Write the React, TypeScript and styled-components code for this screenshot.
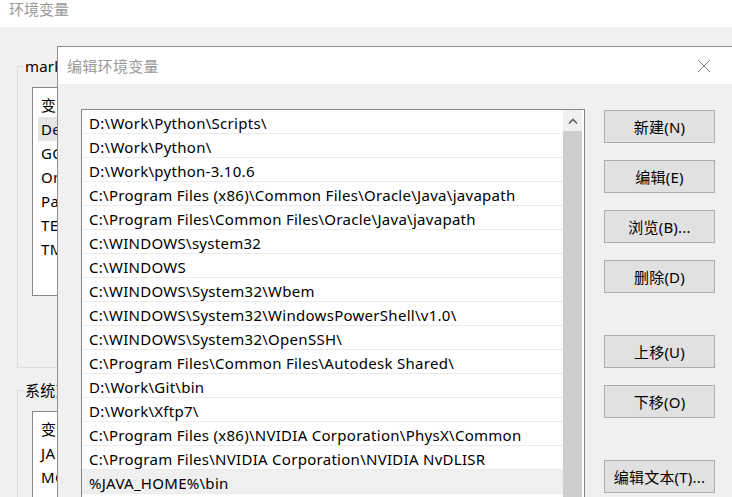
import React from "react";
import styled, { createGlobalStyle } from "styled-components";

const FONT = `"Segoe UI", "Noto Sans", "Noto Sans CJK SC", sans-serif`;

const GlobalStyle = createGlobalStyle`
  html, body { margin: 0; padding: 0; }
  body {
    width: 732px;
    height: 497px;
    overflow: hidden;
    background: #f0f0f0;
    font-family: ${FONT};
    font-size: 15px;
    color: #000;
  }
  #root { width: 732px; height: 497px; position: relative; overflow: hidden; }
`;

const Desktop = styled.div`
  position: relative;
  width: 732px;
  height: 497px;
  overflow: hidden;
`;

/* ---------- background window ---------- */
const BgWindow = styled.div`
  display: flex;
  flex-direction: column;
  width: 732px;
  height: 497px;
  background: #f0f0f0;
`;

const BgTitleBar = styled.div`
  height: 27px;
  flex: none;
  background: #fff;
  color: #9a9a9a;
  padding-left: 9px;
  line-height: 18px;
  font-size: 15px;
`;

const BgBody = styled.div`
  display: flex;
  flex-direction: column;
  padding: 29px 0 0 17px;
  gap: 12px;
`;

const Group = styled.fieldset<{ $height: number }>`
  margin: 0;
  padding: 11px 0 0 14px;
  border: 1px solid #dcdcdc;
  height: ${(p) => p.$height}px;
  box-sizing: border-box;
  min-width: 0;
  width: 700px;
`;

const Legend = styled.legend`
  padding: 0 1px;
  margin-left: -8px;
  font-size: 15px;
  line-height: 20px;
  letter-spacing: 0.2px;
`;

const ListBox = styled.div<{ $height: number }>`
  width: 600px;
  height: ${(p) => p.$height}px;
  border: 1px solid #828790;
  background: #fff;
  box-sizing: border-box;
  padding: 5px 0 0 5px;
`;

const BgRow = styled.div<{ $selected?: boolean }>`
  height: 24px;
  line-height: 24px;
  padding-left: 3px;
  width: 200px;
  letter-spacing: 0.3px;
  background: ${(p) => (p.$selected ? "#e5e5e5" : "transparent")};
`;

/* ---------- dialog ---------- */
const Dialog = styled.div`
  position: absolute;
  left: 57px;
  top: 46px;
  width: 700px;
  height: 470px;
  border: 1px solid #8e8e8e;
  background: #f0f0f0;
  display: flex;
  flex-direction: column;
`;

const TitleBar = styled.div`
  height: 37px;
  flex: none;
  background: #fff;
  display: flex;
  align-items: center;
  padding-left: 9px;
  padding-right: 22px;
  width: 675px;
  box-sizing: border-box;
  color: #9a9a9a;
  font-size: 15px;
`;

const TitleText = styled.span`
  flex: 1;
  margin-top: -1px;
  letter-spacing: 0.3px;
`;

const CloseIcon = styled.svg`
  width: 14px;
  height: 14px;
  flex: none;
`;

const DialogBody = styled.div`
  display: flex;
  align-items: flex-start;
  padding: 25px 0 0 23px;
  gap: 19px;
`;

const PathList = styled.div`
  width: 504px;
  height: 420px;
  box-sizing: border-box;
  border: 1px solid #828790;
  background: #fff;
  display: flex;
  padding-right: 2px;
`;

const Rows = styled.div`
  flex: 1;
  display: flex;
  flex-direction: column;
`;

const PathRow = styled.div<{ $selected?: boolean }>`
  height: 23px;
  flex: none;
  border-bottom: 1px solid #ececec;
  padding-left: 7px;
  line-height: 26px;
  white-space: nowrap;
  font-size: 15px;
  letter-spacing: 0.28px;
  background: ${(p) => (p.$selected ? "#efefef" : "#fff")};
`;

const ScrollBar = styled.div`
  width: 19px;
  flex: none;
  display: flex;
  flex-direction: column;
  background: #f0f0f0;
`;

const ScrollArrow = styled.div`
  height: 21px;
  flex: none;
  display: flex;
  align-items: center;
  justify-content: center;
  background: #f0f0f0;
`;

const ScrollThumb = styled.div`
  flex: 1;
  background: #cdcdcd;
`;

const Buttons = styled.div`
  display: flex;
  flex-direction: column;
  padding-top: 1px;
`;

const Button = styled.div<{ $gap: number }>`
  width: 111px;
  height: 33px;
  box-sizing: border-box;
  margin-top: ${(p) => p.$gap}px;
  background: #e1e1e1;
  border: 1px solid #adadad;
  display: flex;
  align-items: center;
  justify-content: center;
  font-size: 15px;
  letter-spacing: 0.2px;
  white-space: nowrap;
`;

const bgUserRows = ["变量", "De", "GO", "On", "Pa", "TE", "TM"];
const bgSysRows = ["变量", "JA", "MC", "M"];

const paths = [
  "D:\\Work\\Python\\Scripts\\",
  "D:\\Work\\Python\\",
  "D:\\Work\\python-3.10.6",
  "C:\\Program Files (x86)\\Common Files\\Oracle\\Java\\javapath",
  "C:\\Program Files\\Common Files\\Oracle\\Java\\javapath",
  "C:\\WINDOWS\\system32",
  "C:\\WINDOWS",
  "C:\\WINDOWS\\System32\\Wbem",
  "C:\\WINDOWS\\System32\\WindowsPowerShell\\v1.0\\",
  "C:\\WINDOWS\\System32\\OpenSSH\\",
  "C:\\Program Files\\Common Files\\Autodesk Shared\\",
  "D:\\Work\\Git\\bin",
  "D:\\Work\\Xftp7\\",
  "C:\\Program Files (x86)\\NVIDIA Corporation\\PhysX\\Common",
  "C:\\Program Files\\NVIDIA Corporation\\NVIDIA NvDLISR",
  "%JAVA_HOME%\\bin",
];

const buttons: [string, number][] = [
  ["新建(N)", 0],
  ["编辑(E)", 17],
  ["浏览(B)...", 17],
  ["删除(D)", 17],
  ["上移(U)", 42],
  ["下移(O)", 17],
  ["编辑文本(T)...", 42],
];

export default function App() {
  return (
    <>
      <GlobalStyle />
      <Desktop>
        <BgWindow>
          <BgTitleBar>环境变量</BgTitleBar>
          <BgBody>
            <Group $height={312}>
              <Legend>mark</Legend>
              <ListBox $height={209}>
                {bgUserRows.map((r, i) => (
                  <BgRow key={i} $selected={i === 1}>
                    {r}
                  </BgRow>
                ))}
              </ListBox>
            </Group>
            <Group $height={140}>
              <Legend>系统变量</Legend>
              <ListBox $height={120}>
                {bgSysRows.map((r, i) => (
                  <BgRow key={i}>{r}</BgRow>
                ))}
              </ListBox>
            </Group>
          </BgBody>
        </BgWindow>

        <Dialog>
          <TitleBar>
            <TitleText>编辑环境变量</TitleText>
            <CloseIcon viewBox="0 0 14 14">
              <path d="M1 1 L13 13 M13 1 L1 13" stroke="#8a8a8a" strokeWidth="1" fill="none" />
            </CloseIcon>
          </TitleBar>
          <DialogBody>
            <PathList>
              <Rows>
                {paths.map((p, i) => (
                  <PathRow key={i} $selected={i === paths.length - 1}>
                    {p}
                  </PathRow>
                ))}
              </Rows>
              <ScrollBar>
                <ScrollArrow>
                  <svg width="10" height="6" viewBox="0 0 10 6">
                    <path d="M1 5.5 L5 1.5 L9 5.5" stroke="#606060" strokeWidth="1.6" fill="none" />
                  </svg>
                </ScrollArrow>
                <ScrollThumb />
              </ScrollBar>
            </PathList>
            <Buttons>
              {buttons.map(([label, gap]) => (
                <Button key={label} $gap={gap}>
                  {label}
                </Button>
              ))}
            </Buttons>
          </DialogBody>
        </Dialog>
      </Desktop>
    </>
  );
}
